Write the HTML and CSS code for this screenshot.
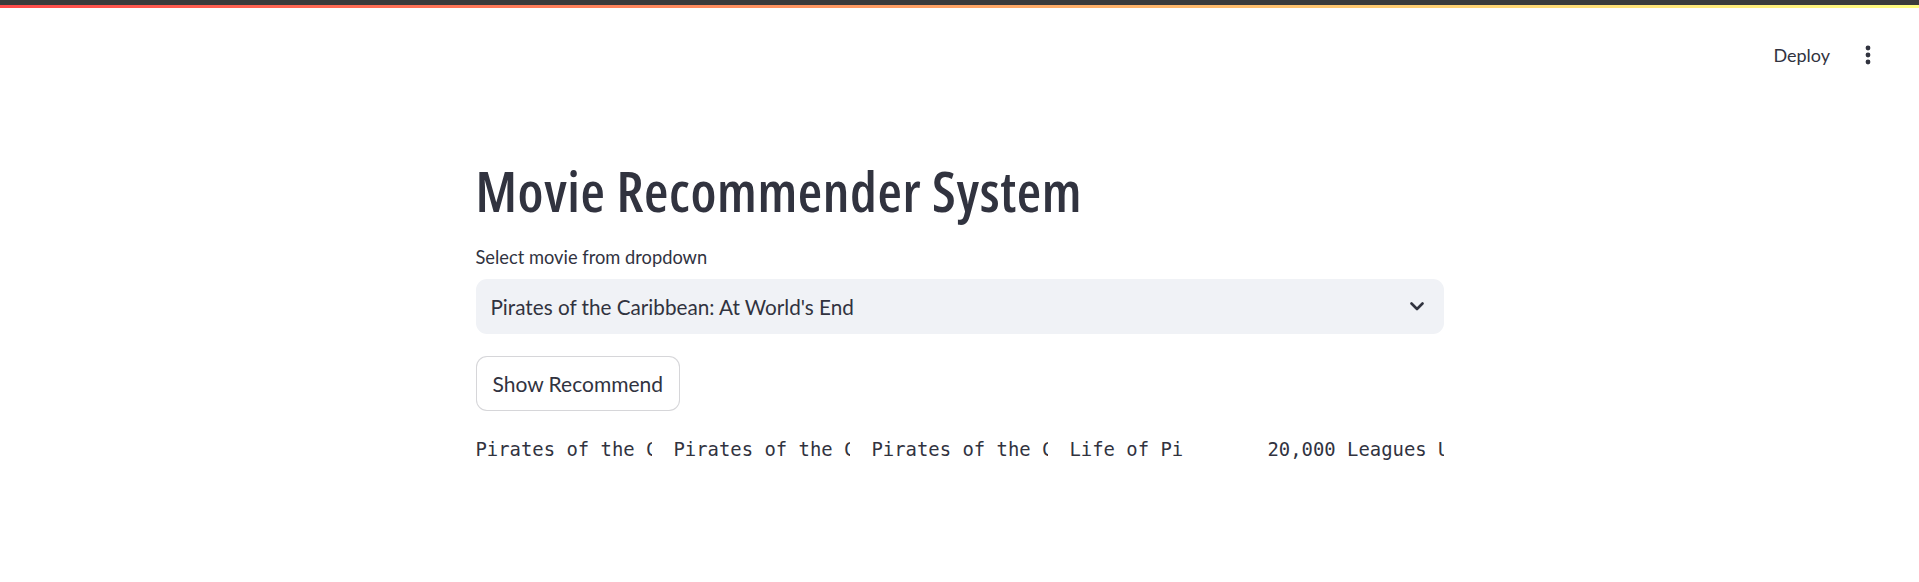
FILE: index.html
```html
<!DOCTYPE html>
<html lang="en">
<head>
<meta charset="utf-8">
<title>Movie Recommender System</title>
<link rel="stylesheet" href="styles.css">
</head>
<body>
<header class="app-header">
  <div class="frame-bar"></div>
  <div class="decoration"></div>
  <div class="toolbar">
    <span class="deploy">Deploy</span>
    <span class="menu" aria-label="Main menu">
      <svg width="8" height="20" viewBox="0 0 8 20"><circle cx="4" cy="3" r="2.4" fill="#31333f"/><circle cx="4" cy="10" r="2.4" fill="#31333f"/><circle cx="4" cy="17" r="2.4" fill="#31333f"/></svg>
    </span>
  </div>
</header>
<main class="block-container">
  <h1 class="title">Movie Recommender System</h1>
  <label class="widget-label">Select movie from dropdown</label>
  <div class="select">
    <span class="select-value">Pirates of the Caribbean: At World's End</span>
    <svg class="chevron" width="14" height="9" viewBox="0 0 14 9"><path d="M1.5 1.5 L7 7 L12.5 1.5" fill="none" stroke="#31333f" stroke-width="2.6" stroke-linecap="round" stroke-linejoin="round"/></svg>
  </div>
  <button class="btn">Show Recommend</button>
  <div class="columns">
    <div class="col"><pre class="mono">Pirates of the Caribbean: Dead Man's Chest</pre></div>
    <div class="col"><pre class="mono">Pirates of the Caribbean: On Stranger Tides</pre></div>
    <div class="col"><pre class="mono">Pirates of the Caribbean: The Curse of the Black Pearl</pre></div>
    <div class="col"><pre class="mono">Life of Pi</pre></div>
    <div class="col"><pre class="mono">20,000 Leagues Under the Sea</pre></div>
  </div>
</main>
</body>
</html>
```
FILE: styles.css
```css
html, body {
  margin: 0;
  padding: 0;
  background: #ffffff;
}
body {
  font-family: "Lato", "Noto Sans", sans-serif;
  color: #31333f;
}
.app-header {
  height: 82px;
  display: flex;
  flex-direction: column;
}
.frame-bar {
  height: 5px;
  background: #3b3b3b;
}
.decoration {
  height: 3px;
  background: linear-gradient(90deg, #ff4b4b, #fffd80);
}
.toolbar {
  flex: 1;
  display: flex;
  justify-content: flex-end;
  align-items: center;
  padding-right: 47px;
  padding-top: 20px;
}
.deploy {
  font-size: 18px;
  line-height: 24px;
  color: #31333f;
  margin-right: 34px;
}
.menu {
  display: flex;
  align-items: center;
}
.block-container {
  width: 968px;
  margin: 0 auto;
  display: flex;
  flex-direction: column;
  align-items: flex-start;
}
.title {
  margin: 72px 0 0 0;
  font-family: "Open Sans", sans-serif;
  font-stretch: 75%;
  font-size: 56px;
  line-height: 72px;
  font-weight: 600;
  letter-spacing: 0.6px;
  color: #31333f;
}
.widget-label {
  margin-top: 19px;
  font-size: 18.3px;
  line-height: 24px;
}
.select {
  margin-top: 10px;
  box-sizing: border-box;
  width: 100%;
  height: 55px;
  background: #f0f2f6;
  border-radius: 11px;
  display: flex;
  align-items: center;
  justify-content: space-between;
  padding: 0 20px 0 15px;
}
.select-value {
  font-size: 20.7px;
  line-height: 28px;
}
.btn {
  margin-top: 22px;
  height: 55px;
  box-sizing: border-box;
  padding: 0 16px;
  background: #ffffff;
  border: 1px solid rgba(49, 51, 63, 0.2);
  border-radius: 11px;
  font-family: "Lato", "Noto Sans", sans-serif;
  font-size: 21px;
  color: #31333f;
}
.columns {
  margin-top: 25px;
  width: 100%;
  display: grid;
  grid-template-columns: repeat(5, 1fr);
  column-gap: 22px;
}
.col {
  overflow: hidden;
  min-width: 0;
}
.mono {
  margin: 0;
  font-family: "DejaVu Sans Mono", "Liberation Mono", monospace;
  font-size: 18.9px;
  line-height: 27px;
  color: #31333f;
  white-space: pre;
}
```
